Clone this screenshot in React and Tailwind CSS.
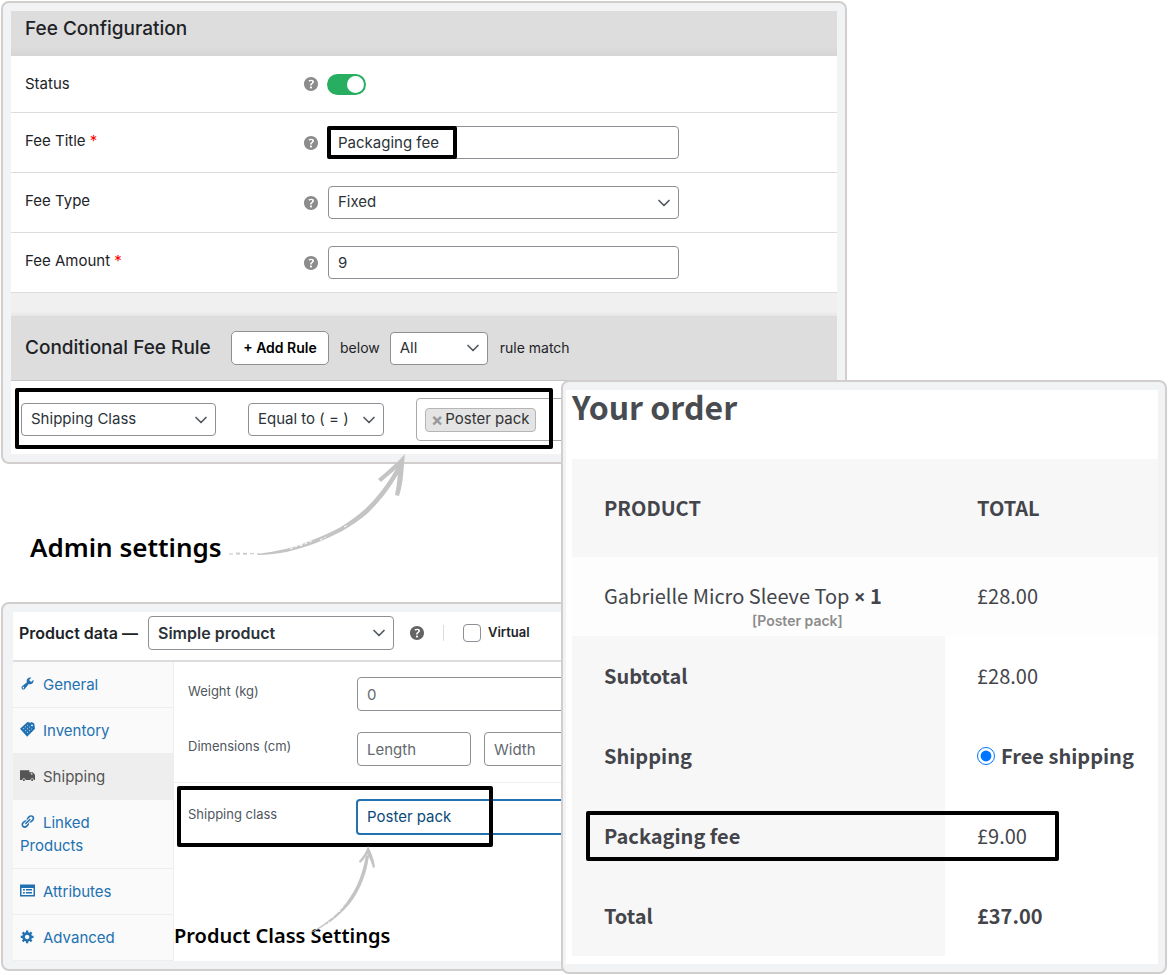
import { useState } from 'react';
import { ChevronDown } from 'lucide-react';

const ICONS = {
  help: 'M17 10c0-3.87-3.14-7-7-7-3.87 0-7 3.13-7 7s3.13 7 7 7c3.86 0 7-3.13 7-7zm-6.3 1.48H9.14v-.43c0-.38.08-.7.24-.98s.46-.57.88-.89c.41-.29.68-.53.81-.71.14-.18.2-.39.2-.62 0-.25-.09-.44-.28-.58-.19-.13-.45-.19-.79-.19-.58 0-1.25.19-2 .57l-.64-1.28c.87-.49 1.8-.74 2.77-.74.81 0 1.45.2 1.92.58.48.39.71.91.71 1.55 0 .43-.09.8-.29 1.11-.19.32-.57.67-1.11 1.06-.38.28-.61.49-.71.63-.1.15-.15.34-.15.57v.35zm-1.47 2.74c-.18-.17-.27-.42-.27-.73 0-.33.08-.58.26-.75s.43-.25.77-.25c.32 0 .57.09.75.26s.27.42.27.74c0 .3-.09.55-.27.72-.18.18-.43.27-.75.27-.33 0-.58-.09-.76-.26z',
  general:
    'M16.68 9.77c-1.34 1.34-3.3 1.67-4.95.99l-5.41 6.52c-.99.99-2.59.99-3.58 0s-.99-2.59 0-3.57l6.52-5.42c-.68-1.65-.35-3.61.99-4.95 1.28-1.28 3.12-1.62 4.72-1.06l-2.89 2.89 2.82 2.82 2.86-2.87c.53 1.58.18 3.39-1.08 4.65zM3.81 16.21c.4.39 1.04.39 1.43 0 .4-.4.4-1.04 0-1.43-.39-.4-1.03-.4-1.43 0-.39.39-.39 1.03 0 1.43z',
  inventory:
    'M0 9 10 0l4 1 1.500-1L19 2l1 7L9.500 19.500zM16 3l1.500 1.500L16 6l-1.500-1.500zM10 3.500l.8.8-.8.8-.8-.8zM12.500 6l.8.8-.8.8-.8-.8zM15 8.500l.8.8-.8.8-.8-.8zM7.500 5.800l.8.8-.8.8-.8-.8zM10 8.300l.8.8-.8.8-.8-.8zM12.500 10.800l.8.8-.8.8-.8-.8zM5 8.100l.8.8-.8.8-.8-.8zM7.500 10.600l.8.8-.8.8-.8-.8zM10 13.100l.8.8-.8.8-.8-.8z',
  shipping:
    'M0 3h12.500v2.500H17l3 3.500v7h-1.600a2.200 2.200 0 0 0-4.400 0H7.400a2.200 2.200 0 0 0-4.400 0H0zM14.500 7v1.500h2.700L16 7zM5.200 14.700a1.400 1.400 0 1 1-.01 0zM16.200 14.700a1.400 1.400 0 1 1-.01 0z',
  linked:
    'M17.74 2.76c1.68 1.69 1.68 4.41 0 6.1l-1.53 1.52c-1.12 1.12-2.7 1.47-4.14 1.09l2.62-2.61.76-.77.76-.76c.84-.84.84-2.2 0-3.04-.84-.85-2.2-.85-3.04 0l-.77.76-3.38 3.38c-.37-1.44-.02-3.02 1.1-4.14l1.52-1.53c1.69-1.68 4.42-1.68 6.1 0zM8.59 13.43l5.34-5.34c.42-.42.42-1.1 0-1.52-.44-.43-1.13-.39-1.53 0l-5.33 5.34c-.42.42-.42 1.1 0 1.52.44.43 1.13.39 1.52 0zm-.76 2.29l4.14-4.15c.38 1.44.03 3.02-1.09 4.14l-1.52 1.53c-1.69 1.68-4.41 1.68-6.1 0-1.68-1.68-1.68-4.42 0-6.1l1.53-1.52c1.12-1.12 2.7-1.47 4.14-1.1l-4.14 4.15c-.85.84-.85 2.2 0 3.05.84.84 2.2.84 3.04 0z',
  attributes:
    'M0 2h20v16H0zM2 6.500v9.500h16V6.500zM4 8h2.500v2H4zM4 12h2.500v2H4zM8 8h8v2H8zM8 12h8v2H8z',
  advanced:
    'M18 12h-2.18c-.17.7-.44 1.35-.81 1.93l1.54 1.54-2.1 2.1-1.54-1.54c-.58.36-1.23.63-1.91.79V19H8v-2.18c-.68-.16-1.33-.43-1.91-.79l-1.54 1.54-2.12-2.12 1.54-1.54c-.36-.58-.63-1.23-.79-1.91H1V9.03h2.17c.16-.7.44-1.35.8-1.94L2.43 5.55l2.1-2.1 1.54 1.54c.58-.37 1.24-.64 1.93-.81V2h3v2.18c.68.16 1.33.43 1.91.79l1.54-1.54 2.12 2.12-1.54 1.54c.36.59.64 1.24.8 1.94H18V12zm-8.5 1.5c1.66 0 3-1.34 3-3s-1.34-3-3-3-3 1.34-3 3 1.34 3 3 3z',
};

const TABS = [
  { id: 'general', label: 'General' },
  { id: 'inventory', label: 'Inventory' },
  { id: 'shipping', label: 'Shipping' },
  { id: 'linked', label: 'Linked Products' },
  { id: 'attributes', label: 'Attributes' },
  { id: 'advanced', label: 'Advanced' },
];

const field =
  'rounded border border-[#8c8f94] bg-white px-[9px] text-[#2c3338] placeholder:text-[#646970] focus:outline-none';

function Icon({ name, className }) {
  return (
    <svg
      viewBox="0 0 20 20"
      fill="currentColor"
      fillRule="evenodd"
      className={className}
      aria-hidden
    >
      <path d={ICONS[name]} />
    </svg>
  );
}

function Help({ className }) {
  return (
    <button type="button" aria-label="Help" className={className}>
      <Icon name="help" className="block h-5 w-5" />
    </button>
  );
}

function Select({
  id,
  label,
  options,
  className = '',
  selectClass = 'h-[33px] text-[15px]',
}) {
  return (
    <div className={`relative ${className}`}>
      <select
        id={id}
        aria-label={label}
        className={`block w-full appearance-none ${field} ${selectClass}`}
      >
        {options.map((o) => (
          <option key={o}>{o}</option>
        ))}
      </select>
      <ChevronDown
        className="pointer-events-none absolute top-1/2 right-[5px] h-5 w-5 -translate-y-1/2 text-[#50575e]"
        aria-hidden
      />
    </div>
  );
}

function Frame({ className = '', children }) {
  return (
    <section
      className={`m-px rounded-lg border-2 border-[#d2cece] bg-[#f1f3f5] ${className}`}
    >
      {children}
    </section>
  );
}

function Highlight({ className }) {
  return (
    <div
      className={`pointer-events-none absolute rounded-xs border-4 border-black ${className}`}
      aria-hidden
    />
  );
}

function FeeRow({ id, label, required, children }) {
  return (
    <div className="flex items-center border-b border-[#dcdcdc] py-[13px] pl-[14px]">
      <label htmlFor={id} className="w-[276px] pb-[2px]">
        {label} {required && <span className="text-[#f00]">*</span>}
      </label>
      <Help className="mr-[7px] text-[#8c8c8c]" />
      {children}
    </div>
  );
}

function FeeConfiguration() {
  const [enabled, setEnabled] = useState(true);

  return (
    <Frame className="p-2 text-[15px] text-[#1d2327]">
      <h2 className="h-[45px] bg-linear-to-b from-[#ddd] from-80% to-[#d5d5d5] pt-1 pl-[14px] text-[19px] leading-7 font-medium">
        Fee Configuration
      </h2>
      <div className="bg-white">
        <div className="flex h-[57px] items-center border-b border-[#dcdcdc] pl-[14px]">
          <label htmlFor="status" className="w-[276px]">
            Status
          </label>
          <Help className="mr-[6px] text-[#8c8c8c]" />
          <input
            id="status"
            type="checkbox"
            role="switch"
            checked={enabled}
            onChange={(e) => setEnabled(e.target.checked)}
            className="h-[21px] w-[39px] cursor-pointer appearance-none rounded-full bg-gray-400 p-[2px] before:block before:h-[17px] before:w-[17px] before:rounded-full before:bg-white checked:bg-[#27ae60] checked:before:ml-[18px]"
          />
        </div>
        <FeeRow id="fee-title" label="Fee Title" required>
          <div className="relative w-[351px]">
            <input
              id="fee-title"
              type="text"
              defaultValue="Packaging fee"
              className={`block h-[33px] w-full text-[15px] ${field}`}
            />
            <Highlight className="inset-y-0 -left-px w-[130px]" />
          </div>
        </FeeRow>
        <FeeRow id="fee-type" label="Fee Type">
          <Select
            id="fee-type"
            options={['Fixed', 'Percentage']}
            className="w-[351px]"
          />
        </FeeRow>
        <FeeRow id="fee-amount" label="Fee Amount" required>
          <input
            id="fee-amount"
            type="text"
            defaultValue="9"
            className={`h-[33px] w-[351px] text-[15px] ${field}`}
          />
        </FeeRow>
      </div>

      <div className="h-[23px] bg-linear-to-b from-[#f0f0f0] from-80% to-[#e6e6e6]" />

      <div className="flex h-[65px] items-center border-b border-[#c3c4c7] bg-[#ddd] pl-[14px]">
        <h2 className="w-[206px] text-[19px] font-medium">
          Conditional Fee Rule
        </h2>
        <button
          type="button"
          className="h-[34px] w-[98px] cursor-pointer rounded-[5px] border border-[#8c8f94] bg-white text-sm font-semibold text-black"
        >
          + Add Rule
        </button>
        <span className="mr-[10px] ml-[11px] text-sm">below</span>
        <Select
          id="match"
          label="Match"
          options={['All', 'Any']}
          className="w-[98px]"
        />
        <span className="ml-3 text-sm">rule match</span>
      </div>

      <div className="relative flex h-[73px] items-center bg-white pt-1 pl-[10px]">
        <Select
          id="condition"
          label="Condition"
          options={['Shipping Class', 'Product']}
          className="w-[195px]"
        />
        <Select
          id="operator"
          label="Operator"
          options={['Equal to ( = )', 'Not equal to ( != )']}
          className="ml-8 w-[136px]"
        />
        <div className="mr-4 ml-8 flex h-[43px] flex-1 items-center rounded border border-[#a7aaad] bg-white pl-2">
          <span className="flex h-6 items-center rounded border border-[#b5b5b5] bg-[#e4e4e4] px-[5px] text-[#333]">
            <button
              type="button"
              aria-label="Remove Poster pack"
              className="mr-[2px] cursor-pointer text-lg leading-6 font-bold text-[#999]"
            >
              ×
            </button>
            Poster pack
          </span>
        </div>
        <Highlight className="top-[7px] bottom-[5px] left-1 w-[538px]" />
      </div>
    </Frame>
  );
}

function ProductData() {
  const [tab, setTab] = useState('shipping');

  return (
    <Frame className="p-2 pl-[10px] text-[15px]">
      <div className="flex h-[50px] items-center border-b-2 border-[#dcdcde] bg-white pb-[6px] pl-[6px] text-base text-[#1d2327]">
        <label htmlFor="product-type" className="w-[129px] font-semibold">
          Product data —
        </label>
        <Select
          id="product-type"
          options={['Simple product', 'Grouped product']}
          className="w-[246px]"
          selectClass="h-[34px] font-semibold"
        />
        <Help className="ml-[13px] text-[#646464]" />
        <label className="ml-4 flex h-4 items-center border-l border-[#dcdcde] pl-[19px] text-[13px] font-semibold">
          <input
            type="checkbox"
            className="mr-[7px] h-[18px] w-[18px] appearance-none rounded border border-[#8c8f94] bg-white checked:bg-[#2271b1]"
          />
          Virtual
        </label>
      </div>

      <div className="flex bg-white">
        <nav
          className="w-[161px] shrink-0 border-r border-[#eee] bg-[#fafafa]"
          aria-label="Product data"
        >
          {TABS.map((t) => (
            <a
              key={t.id}
              href={`#${t.id}`}
              onClick={() => setTab(t.id)}
              className={`block border-b border-[#eee] py-[11px] pr-6 pl-[7px] leading-[23px] ${
                tab === t.id ? 'bg-[#eee] text-[#555]' : 'text-[#2271b1]'
              }`}
            >
              <Icon
                name={t.id}
                className="mr-2 mb-[5px] inline-block h-[15px] w-[15px] align-middle"
              />
              {t.label}
            </a>
          ))}
        </nav>

        <div className="flex-1 text-[13px] text-[#50575e]">
          <div className="flex items-center pt-[15px] pl-[14px]">
            <label htmlFor="weight" className="w-[169px] pb-1">
              Weight (kg)
            </label>
            <input
              id="weight"
              type="text"
              placeholder="0"
              className={`h-[34px] min-w-0 flex-1 text-[15px] ${field}`}
            />
          </div>
          <div className="flex items-center gap-[13px] border-b border-[#eee] pt-[21px] pb-4 pl-[14px]">
            <label htmlFor="length" className="w-[156px] pb-1">
              Dimensions (cm)
            </label>
            <input
              id="length"
              type="text"
              placeholder="Length"
              className={`h-[34px] w-[114px] text-[15px] ${field}`}
            />
            <input
              type="text"
              placeholder="Width"
              aria-label="Width"
              className={`h-[34px] w-[114px] text-[15px] ${field}`}
            />
          </div>
          <div className="relative flex items-center pt-4 pl-[14px]">
            <label htmlFor="shipping-class" className="w-[168px] pb-1">
              Shipping class
            </label>
            <select
              id="shipping-class"
              className="h-9 min-w-0 flex-1 appearance-none rounded border-2 border-[#2271b1] bg-white px-[9px] text-[15px] text-[#0a4b78] focus:outline-none"
            >
              <option>Poster pack</option>
              <option>No shipping class</option>
            </select>
            <Highlight className="top-[3px] -bottom-3 left-[3px] w-[316px]" />
            <svg
              viewBox="0 0 70 92"
              className="absolute top-[62px] left-[132px] h-[92px] w-[70px]"
              fill="#c4c4c4"
              aria-hidden
            >
              <path d="M2 89C16 81 27 73 36 63 48 49 56 33 60 10l3 1C60 33 51 52 39 64 28 75 17 83 2 89z" />
              <path d="M62 1c3 6 6 13 7 21l-2 1c-2-6-3-10-6-14-2 4-4 7-7 9l-1-2c4-4 7-9 9-15z" />
              <path
                d="M18 81l6-5M26 73l5-5M33 67l4-5"
                stroke="#fff"
                strokeDasharray="2 3"
              />
            </svg>
          </div>
          <p className="mt-[89px] font-['Noto_Sans',sans-serif] text-xl leading-6 font-semibold text-black">
            Product Class Settings
          </p>
        </div>
      </div>
    </Frame>
  );
}

function OrderRow({ label, highlighted, children }) {
  return (
    <tr className="relative h-20">
      <th className="bg-[#f7f7f7] pl-8 font-bold">{label}</th>
      <td className="pl-8">
        {children}
        {highlighted && (
          <Highlight className="inset-y-[15px] right-[99px] left-[14px]" />
        )}
      </td>
    </tr>
  );
}

function YourOrder() {
  return (
    <Frame className="pt-2 pr-[7px] pb-2 pl-[3px] font-['Noto_Sans_CJK_JP',sans-serif] text-[#43454b]">
      <div className="bg-white pb-2 pl-[6px]">
        <h2 className="h-[69px] text-[32px] leading-8 font-bold text-[#484c51]">
          Your order
        </h2>
        <table className="w-full table-fixed text-left text-xl leading-6">
          <thead>
            <tr className="h-[98px] bg-[#f7f7f7]">
              <th className="w-[373px] pl-8 font-bold">PRODUCT</th>
              <th className="pl-8 font-bold">TOTAL</th>
            </tr>
          </thead>
          <tbody>
            <tr className="h-[79px] bg-[#fdfdfd] align-top">
              <td className="pt-[27px] pl-8">
                Gabrielle Micro Sleeve Top{' '}
                <strong>
                  <span className="font-['Noto_Sans']">×</span> 1
                </strong>
                <div className="pl-[148px] font-[Inter] text-sm leading-6 font-semibold text-[#8c8c8c]">
                  [Poster pack]
                </div>
              </td>
              <td className="pt-[27px] pl-8">£28.00</td>
            </tr>
            <OrderRow label="Subtotal">£28.00</OrderRow>
            <OrderRow label="Shipping">
              <label className="flex items-center gap-[6px] font-bold whitespace-nowrap">
                <input
                  type="radio"
                  name="shipping"
                  defaultChecked
                  className="h-[18px] w-[18px] accent-[#0075ff]"
                />
                Free shipping
              </label>
            </OrderRow>
            <OrderRow label="Packaging fee" highlighted>
              £9.00
            </OrderRow>
            <OrderRow label="Total">
              <strong>£37.00</strong>
            </OrderRow>
          </tbody>
        </table>
      </div>
    </Frame>
  );
}

export default function App() {
  return (
    <main className="grid grid-cols-[562fr_286fr_320fr] bg-white font-[Inter,sans-serif]">
      <div className="col-span-2 col-start-1 row-start-1">
        <FeeConfiguration />
        <div className="relative flex h-[136px] items-end pb-9 pl-[30px]">
          <h1 className="font-['Noto_Sans',sans-serif] text-[26px] leading-9 font-semibold text-black">
            Admin settings
          </h1>
          <svg
            viewBox="0 0 180 106"
            className="absolute -top-[12px] left-[228px] h-[106px] w-[180px]"
            fill="#c4c4c4"
            aria-hidden
          >
            <path d="M30 101C50 98 66 95 84 87 104 80 120 71 136 57 150 44 161 29 170 12l4 2C164 33 154 46 140 60 124 74 106 83 88 90 70 97 50 102 30 102z" />
            <path d="M177 1C175 16 176 28 171 43l-4-1c2-10 3-18 3-28-6 6-12 10-17 15l-3-3c9-8 18-15 27-25z" />
            <path
              d="M1 101h20M8 100l24 1"
              stroke="#c4c4c4"
              strokeDasharray="4 3"
            />
            <path
              d="M62 96l12-5M72 93l14-6M92 87l6-3M116 74l4-2"
              stroke="#fff"
              strokeDasharray="3 2"
            />
          </svg>
        </div>
        <ProductData />
      </div>
      <div className="z-10 col-span-2 col-start-2 row-start-1 mt-[379px] -ml-[2px]">
        <YourOrder />
      </div>
    </main>
  );
}
